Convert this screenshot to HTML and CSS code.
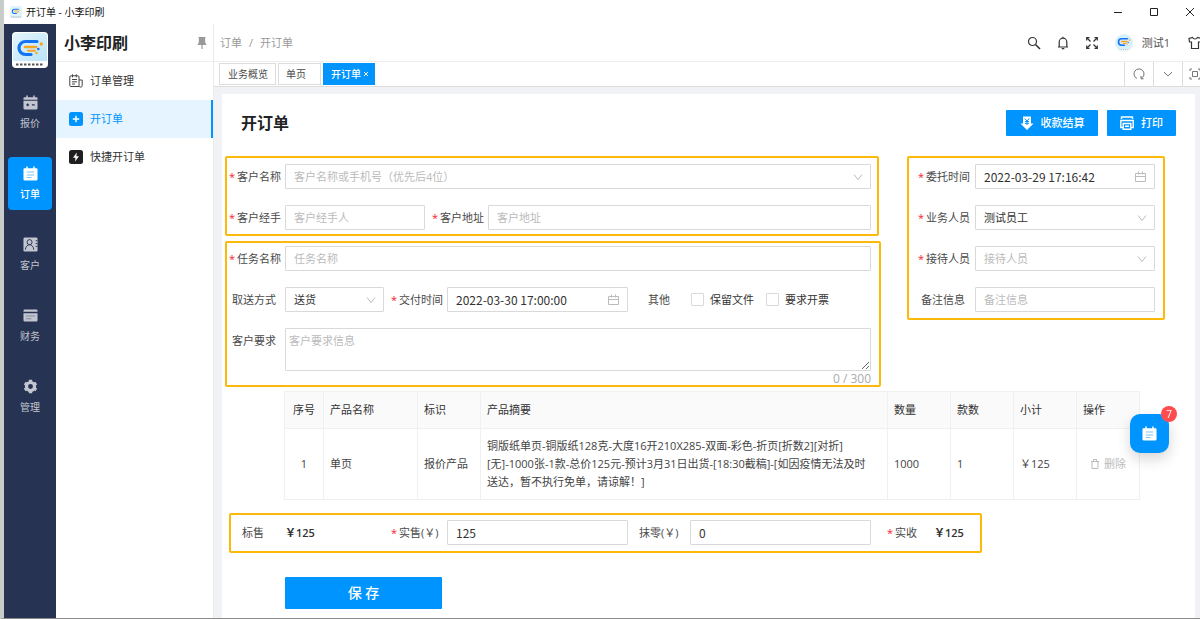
FILE: index.html
```html
<!DOCTYPE html>
<html lang="zh-CN">
<head>
<meta charset="utf-8">
<title>开订单 - 小李印刷</title>
<link rel="stylesheet" href="styles.css">
</head>
<body>
<svg class="defs" aria-hidden="true">
  <defs>
    <linearGradient id="sky" x1="0" y1="0" x2="1" y2="1"><stop offset="0" stop-color="#e4f5fd"/><stop offset="1" stop-color="#b9e3f8"/></linearGradient>
    <symbol id="mark" viewBox="0 0 36 36">
      <path d="M25 9.500H13.500a6.500 6.500 0 0 0 0 13H19" fill="none" stroke="#1473f3" stroke-width="3.200" stroke-linecap="round"/>
      <path d="M13 15h11" stroke="#f6a524" stroke-width="2.600" stroke-linecap="round"/>
      <path d="M16 18.800h7" stroke="#f6a524" stroke-width="2" stroke-linecap="round"/>
      <circle cx="29.300" cy="12" r="1.700" fill="#f6a524"/><circle cx="26.300" cy="17" r="1.300" fill="#1473f3"/><circle cx="24.500" cy="21" r="1.200" fill="#f6a524"/>
    </symbol>
    <symbol id="note" viewBox="0 0 16 16">
      <path fill="currentColor" d="M1.500 2.500h2V1a.8.8 0 0 1 1.600 0v1.500h5.800V1a.8.8 0 0 1 1.600 0v1.500h2a1 1 0 0 1 1 1V14a1.500 1.500 0 0 1-1.500 1.500H2A1.500 1.500 0 0 1 .5 14V3.500a1 1 0 0 1 1-1z"/>
      <path d="M4 6.500h8M4 9.500h8M4 12.300h5" stroke="#7cc4fb" stroke-width="1.100"/>
    </symbol>
    <symbol id="cal" viewBox="0 0 11 11"><path fill="none" stroke="currentColor" d="M.5 2.500h10v8H.5zM.5 5.500h10M3.500 0.500v3M7.500 0.500v3"/></symbol>
    <symbol id="down" viewBox="0 0 10 10"><path fill="none" stroke="currentColor" d="M1 2.500l4 5 4-5"/></symbol>
  </defs>
</svg>
<div class="window">
  <header class="titlebar">
    <svg class="titlebar-logo" viewBox="0 0 36 36"><rect width="36" height="36" rx="5" fill="#e1f4fd"/><use href="#mark"/><path d="M4 33h28" stroke="#888" stroke-width="2" stroke-dasharray="3 2"/></svg>
    <span class="titlebar-name">开订单 - 小李印刷</span>
    <div class="window-buttons">
      <button aria-label="最小化"><svg viewBox="0 0 10 10"><path d="M1 5.500h8"/></svg></button>
      <button aria-label="最大化"><svg viewBox="0 0 10 10"><path d="M1.500 1.500h7v7h-7z"/></svg></button>
      <button aria-label="关闭"><svg viewBox="0 0 10 10"><path d="M1 1l8 8M9 1L1 9"/></svg></button>
    </div>
  </header>
  <div class="app">
    <nav class="rail">
      <svg class="rail-logo" viewBox="0 0 36 36" role="img" aria-label="小李印刷"><rect width="36" height="36" rx="4" fill="#fff"/><path d="M1 5a4 4 0 0 1 4-4h26a4 4 0 0 1 4 4v24H1z" fill="url(#sky)"/><use href="#mark"/><path d="M4 32.500h28" stroke="#555" stroke-width="2" stroke-dasharray="2.500 1.500"/></svg>
      <a class="rail-item" href="#quote">
        <svg viewBox="0 0 16 16"><path fill="currentColor" d="M1.500 2.500h2V1a.8.8 0 0 1 1.600 0v1.500h5.800V1a.8.8 0 0 1 1.600 0v1.500h2a1 1 0 0 1 1 1V5H.5V3.500a1 1 0 0 1 1-1zM.5 6h15v8a1.500 1.500 0 0 1-1.500 1.500H2A1.500 1.500 0 0 1 .5 14z"/><path d="M3.500 10.500h3M5 9v3M9.500 10.500h3" stroke="#273352" stroke-width="1.200"/></svg>
        报价</a>
      <a class="rail-item active" href="#order"><svg><use href="#note"/></svg>订单</a>
      <a class="rail-item" href="#client">
        <svg viewBox="0 0 16 16"><rect x=".5" y=".5" width="15" height="15" rx="1.500" fill="currentColor"/><g fill="none" stroke="#273352" stroke-width="1"><circle cx="7" cy="5.500" r="2.700"/><path d="M2.500 13.500c.3-3 2-5.300 4.500-5.300s4.200 2.300 4.500 5.300M13.500 4h2M13.500 7h2M13.500 10h2"/></g></svg>
        客户</a>
      <a class="rail-item" href="#finance">
        <svg viewBox="0 0 16 16"><path fill="currentColor" d="M.5 3A1.500 1.500 0 0 1 2 1.500h12A1.500 1.500 0 0 1 15.500 3v1H.5zM.5 5.500h15V13a1.500 1.500 0 0 1-1.500 1.500H2A1.500 1.500 0 0 1 .5 13z"/><path d="M3 8.500h10M3 11.500h6" stroke="#7f879b" stroke-width="1"/></svg>
        财务</a>
      <a class="rail-item" href="#manage">
        <svg viewBox="0 0 16 16"><g fill="none" stroke="currentColor"><circle cx="8" cy="8" r="4.300" stroke-width="3.400"/><path d="M8 .8v2.500M8 12.700v2.500M1.800 4.400l2.100 1.300M12.100 10.300l2.100 1.300M1.800 11.600l2.100-1.300M12.100 5.700l2.100-1.300" stroke-width="3.600"/></g></svg>
        管理</a>
    </nav>
    <aside class="side">
      <div class="side-head"><h1>小李印刷</h1>
        <button class="plain" aria-label="固定菜单"><svg class="pin" viewBox="0 0 10 12"><path fill="#999" d="M1.500 0h7v1.200H8L8.300 6l1 1v1H5.600v4H4.400V8H.7V7l1-1L2 1.200h-.5z"/></svg></button></div>
      <a class="side-item" href="#list"><svg viewBox="0 0 14 14" fill="none" stroke="#444"><path d="M10 12.500H2a1.200 1.200 0 0 1-1.200-1.200V3A1.200 1.200 0 0 1 2 1.800h6.800A1.200 1.200 0 0 1 10 3v8.500a1.500 1.500 0 0 0 3.200 0V6H10M3.500.3v3M7.300.3v3M3 5.500h5M3 7.800h5M3 10h3"/></svg>订单管理</a>
      <a class="side-item active" href="#new"><svg viewBox="0 0 14 14"><rect width="14" height="14" rx="2.500" fill="#0094fe"/><path d="M7 3.800v6.400M3.800 7h6.400" stroke="#fff" stroke-width="1.400"/></svg>开订单</a>
      <a class="side-item" href="#quick"><svg viewBox="0 0 14 14"><rect width="14" height="14" rx="2.500" fill="#1f1f1f"/><path d="M7.800 2.500L4 7.700h2.500L6 11.500l4-5.300H7.400z" fill="#fff"/></svg>快捷开订单</a>
    </aside>
    <div class="main">
      <div class="topbar">
        <nav class="crumbs"><a href="#order">订单</a><span>/</span><span>开订单</span></nav>
        <div class="tools">
          <button class="plain" aria-label="搜索"><svg viewBox="0 0 14 14"><circle cx="5.500" cy="5.500" r="4"/><path d="M8.500 8.500l4.500 4.500" stroke-width="1.600"/></svg></button>
          <button class="plain" aria-label="通知"><svg viewBox="0 0 14 14"><path d="M3.200 10.500V6a3.800 3.800 0 0 1 7.600 0v4.500M2 11h10M7 .8v1.500M5.700 12.700h2.600"/></svg></button>
          <button class="plain" aria-label="全屏"><svg viewBox="0 0 14 14"><path stroke-width="1.300" d="M2 2l3.500 3.500M12 2L8.500 5.500M2 12l3.500-3.500M12 12L8.500 8.500"/><path d="M1.700 4.500V1.700h2.800M9.500 1.700h2.800v2.800M1.700 9.500v2.800h2.800M9.500 12.300h2.800V9.500"/></svg></button>
          <a class="user" href="#me"><svg viewBox="0 0 36 36"><circle cx="18" cy="18" r="18" fill="#d8f0fc"/><path d="M5 30h26a18 18 0 0 1-26 0z" fill="#fff"/><use href="#mark"/><path d="M9 31.500h18" stroke="#888" stroke-width="1.500" stroke-dasharray="2 1.500"/></svg>测试1</a>
          <button class="plain" aria-label="主题"><svg viewBox="0 0 14 14"><path d="M4.500 1.500c1 2 4 2 5 0l3.500 1-.5 3.500h-2v6.500h-7V6h-2L1 2.500z"/></svg></button>
        </div>
      </div>
      <div class="tabs">
        <div class="tab-list">
          <a class="tab" href="#overview">业务概览</a>
          <a class="tab wide" href="#single">单页</a>
          <a class="tab active" href="#new">开订单<button class="tab-close" aria-label="关闭标签"><svg viewBox="0 0 6 6"><path d="M1 1l4 4M5 1L1 5" stroke="#fff"/></svg></button></a>
        </div>
        <div class="tab-tools">
          <button aria-label="刷新"><svg viewBox="0 0 12 12"><path d="M4 10.500A5 5 0 1 1 8 10.500M8 8v2.800h2.600"/></svg></button>
          <button aria-label="更多"><svg viewBox="0 0 12 12"><path d="M2 4l4 4 4-4"/></svg></button>
          <button aria-label="最大化内容"><svg viewBox="0 0 12 12"><path d="M3.500 3.500h5v5h-5zM1 3V1h2M9 1h2v2M1 9v2h2M9 11h2V9"/></svg></button>
        </div>
      </div>
      <main class="stage">
        <form class="panel">
          <div class="panel-head">
            <h2>开订单</h2>
            <button type="button" class="primary settle"><svg viewBox="0 0 14 14"><path fill="#fff" d="M3 .5h8v7h2.500L7 14 .5 7.500H3z"/><path d="M4.800 2.500L7 5l2.200-2.500M7 5v4M5 5.500h4M5 7.300h4" fill="none" stroke="#0094fe"/></svg>收款结算</button>
            <button type="button" class="primary print"><svg viewBox="0 0 14 14" fill="none" stroke="#fff" stroke-width="1.400"><path d="M1.500 3V1h11v2M2.500 11.500H.8v-7h12.400v7h-1.700M3.200 7.500h7.600v5.700H3.200zM5 10.300h4"/></svg>打印</button>
          </div>
          <div class="columns">
            <div class="left">
              <section class="frame client">
                <div class="row">
                  <label class="req" for="name">客户名称</label>
                  <span class="pick grow"><select id="name" class="hint"><option>客户名称或手机号（优先后4位）</option></select><svg><use href="#down"/></svg></span>
                </div>
                <div class="row">
                  <label class="req" for="agent">客户经手</label>
                  <input id="agent" class="agent" placeholder="客户经手人">
                  <label class="req mid" for="addr">客户地址</label>
                  <input id="addr" class="grow" placeholder="客户地址">
                </div>
              </section>
              <section class="frame task">
                <div class="row">
                  <label class="req" for="task">任务名称</label>
                  <input id="task" class="grow" placeholder="任务名称">
                </div>
                <div class="row">
                  <label for="delivery">取送方式</label>
                  <span class="pick delivery"><select id="delivery"><option>送货</option></select><svg><use href="#down"/></svg></span>
                  <label class="req mid" for="due">交付时间</label>
                  <span class="pick medium"><input id="due" class="date" value="2022-03-30 17:00:00"><svg class="cal"><use href="#cal"/></svg></span>
                  <span class="other">其他</span>
                  <label class="check"><input type="checkbox">保留文件</label>
                  <label class="check"><input type="checkbox">要求开票</label>
                </div>
                <div class="row top">
                  <label for="wish">客户要求</label>
                  <div class="grow area"><textarea id="wish" placeholder="客户要求信息"></textarea><span class="count">0 / 300</span></div>
                </div>
              </section>
            </div>
            <section class="frame staff">
              <div class="row"><label class="req" for="time">委托时间</label><span class="pick grow"><input id="time" class="date" value="2022-03-29 17:16:42"><svg class="cal"><use href="#cal"/></svg></span></div>
              <div class="row"><label class="req" for="sales">业务人员</label><span class="pick grow"><select id="sales"><option>测试员工</option></select><svg><use href="#down"/></svg></span></div>
              <div class="row"><label class="req" for="host">接待人员</label><span class="pick grow"><select id="host" class="hint"><option>接待人员</option></select><svg><use href="#down"/></svg></span></div>
              <div class="row"><label for="memo">备注信息</label><input id="memo" class="grow" placeholder="备注信息"></div>
            </section>
          </div>
          <table class="goods">
            <colgroup><col class="c-no"><col class="c-name"><col class="c-tag"><col><col class="c-num"><col class="c-num"><col class="c-num"><col class="c-num"></colgroup>
            <thead><tr><th class="center">序号</th><th>产品名称</th><th>标识</th><th>产品摘要</th><th>数量</th><th>款数</th><th>小计</th><th>操作</th></tr></thead>
            <tbody><tr><td class="center">1</td><td>单页</td><td>报价产品</td>
              <td>铜版纸单页-铜版纸128克-大度16开210X285-双面-彩色-折页[折数2][对折]<br>[无]-1000张-1款-总价125元-预计3月31日出货-[18:30截稿]-[如因疫情无法及时<br>送达，暂不执行免单，请谅解！]</td>
              <td>1000</td><td>1</td><td>￥125</td>
              <td class="center"><button type="button" class="remove" disabled><svg viewBox="0 0 10 10"><path d="M1 2.500h8M3.500 2.500v-2h3v2M2 2.500v7h6v-7" fill="none" stroke="currentColor"/></svg>删除</button></td></tr></tbody>
          </table>
          <section class="frame total">
            <span class="sum-label">标售</span><strong class="sum">￥125</strong>
            <label class="req" for="price">实售(￥)</label><input id="price" class="medium date" value="125">
            <label for="round">抹零(￥)</label><input id="round" class="medium date" value="0">
            <span class="req paid">实收</span><strong>￥125</strong>
          </section>
          <button type="submit" class="primary save">保 存</button>
        </form>
      </main>
    </div>
  </div>
  <button class="float" aria-label="待办"><svg><use href="#note"/></svg><span class="badge">7</span></button>
</div>
</body>
</html>
```
FILE: styles.css
```css
* { box-sizing: border-box; }
body {
  margin: 0;
  font: 11px/18px "Open Sans", "Noto Sans CJK SC", sans-serif;
  color: #4a4a4a;
  background: #fff;
}
button, input, select, textarea { font: inherit; color: inherit; margin: 0; }
button { cursor: pointer; border: 0; padding: 0; background: none; }
a { color: inherit; text-decoration: none; }
h1, h2 { margin: 0; font-size: 16px; line-height: 24px; font-weight: 700; color: #222; }
svg { flex: none; }
.defs { position: absolute; width: 0; height: 0; }
.window {
  display: flex;
  flex-direction: column;
  min-height: 100vh;
  border-left: 4px solid #c8cdcc;
  border-bottom: 1px solid #8c8c8c;
  overflow: hidden;
}
.titlebar { display: flex; align-items: center; height: 24px; padding-left: 6px; font-size: 10px; color: #111; }
.titlebar-logo { width: 12px; height: 12px; margin-right: 4px; }
.window-buttons { display: flex; margin: 0 -8px 0 auto; }
.window-buttons button { width: 36px; height: 22px; display: grid; place-items: center; }
.window-buttons svg { width: 10px; height: 10px; fill: none; stroke: #222; }
.app { flex: 1; display: flex; }

.rail { width: 52px; background: #273352; color: #c2c6d0; display: flex; flex-direction: column; align-items: center; }
.rail-logo { width: 36px; height: 36px; margin: 8px 0 18px; }
.rail-item {
  width: 44px; height: 53px; margin-bottom: 18px; padding-top: 2px; border-radius: 4px;
  display: flex; flex-direction: column; align-items: center; justify-content: center; gap: 4px;
  font-size: 10px;
}
.rail-item svg { width: 15px; height: 15px; }
.rail-item.active { background: #0094fe; color: #fff; font-weight: 500; }

.side { width: 158px; border-right: 1px solid #ebebeb; }
.side-head { display: flex; align-items: center; justify-content: space-between; height: 38px; padding: 0 6px 0 8px; border-bottom: 1px solid #eee; }
.pin { width: 10px; height: 12px; display: block; }
.side-item { display: flex; align-items: center; gap: 7px; height: 38px; padding-left: 13px; color: #333; }
.side-item svg { width: 14px; height: 14px; }
.side-item.active { background: #e6f4ff; color: #0094fe; border-right: 2px solid #0094fe; }

.main { flex: 1; min-width: 0; display: flex; flex-direction: column; }
.topbar { display: flex; align-items: center; justify-content: space-between; height: 38px; padding-left: 6px; border-bottom: 1px solid #eee; }
.crumbs { display: flex; gap: 7px; color: #999; }
.tools { display: flex; align-items: center; gap: 15px; margin-right: -2px; color: #555; }
.plain { display: block; }
.tools .plain svg { width: 14px; height: 14px; display: block; fill: none; stroke: #333; stroke-width: 1.2; }
.tools .user { display: flex; align-items: center; gap: 9px; margin: 0 3px 0 1px; }
.tools .user svg { width: 18px; height: 18px; }
.tabs { display: flex; justify-content: space-between; height: 25px; border-bottom: 1px solid #ddd; }
.tab-list { display: flex; gap: 2px; padding: 1px 0 1px 5px; }
.tab { display: flex; align-items: center; padding: 0 8px; border: 1px solid #ddd; font-size: 10px; }
.tab:first-child { padding: 0 7px 0 8px; }
.tab.wide { padding: 0 14px 0 7px; }
.tab.active { background: #0094fe; border-color: #0094fe; color: #fff; font-weight: 500; padding: 0 5px 0 7px; }
.tab-close { margin-left: 2px; }
.tab-close svg { display: block; width: 6px; height: 6px; }
.tab-tools { display: flex; margin-right: -3px; }
.tab-tools button { width: 29px; border-left: 1px solid #ddd; display: grid; place-items: center; }
.tab-tools button:last-child { width: 21px; padding-left: 4px; }
.tab-tools svg { width: 12px; height: 12px; fill: none; stroke: #777; }

.stage { flex: 1; background: #f0f2f5; padding: 7px 5px 0 8px; }
.panel { background: #fff; min-height: 100%; padding: 0 30px 8px 3px; display: flow-root; }
.panel-head { display: flex; align-items: center; gap: 9px; margin: 16px -11px 20px 16px; }
.panel-head h2 { margin-right: auto; }
.primary { background: #0094fe; color: #fff; border-radius: 1px; font-weight: 500; display: flex; align-items: center; justify-content: center; }
.panel-head .primary { height: 26px; gap: 7px; }
.primary svg { width: 14px; height: 14px; }
.settle { width: 92px; }
.print { width: 69px; }

.columns { display: flex; align-items: flex-start; gap: 26px; }
.left { flex: 1; min-width: 0; display: flex; flex-direction: column; gap: 5px; }
.frame { border: 2px solid #fdb90a; border-radius: 2px; }
.client { margin-right: 2px; padding: 6px 6px 4px 0; }
.task { padding: 3px 8px 0 0; }
.staff { width: 258px; padding: 6px 8px 6px 7px; }
.client, .task, .staff { display: flex; flex-direction: column; gap: 16px; }
.row { display: flex; align-items: center; }
.row.top { align-items: flex-start; }
.row > label { width: 58px; padding-left: 5px; flex: none; }
.row > .req { padding-left: 2px; }
.req::before { content: "*"; display: inline-block; width: 8px; color: #f5222d; }
.staff .row > label { width: 59px; }
.row > .mid { width: 63px; padding-left: 7px; }
.row.top > label { padding-top: 4px; }
.grow { flex: 1; min-width: 0; }
input:not([type]), select, textarea {
  height: 25px; border: 1px solid #d9d9d9; border-radius: 1px; background: #fff;
  padding: 0 8px; outline: 0; appearance: none; color: #333;
}
::placeholder { color: #bbb; opacity: 1; }
select.hint { color: #bbb; }
.pick { display: grid; align-items: center; }
.pick > * { grid-area: 1 / 1; width: 100%; min-width: 0; }
.pick > svg { width: 10px; height: 10px; justify-self: end; margin-right: 8px; color: #bbb; pointer-events: none; }
.pick > .cal { width: 11px; height: 11px; margin-right: 9px; }
input.date { font-family: "Noto Sans CJK SC", sans-serif; font-size: 12px; }
.agent { width: 140px; }
.delivery { width: 99px; }
.medium { width: 181px; }
.other { margin: 0 21px 0 20px; }
.row > .check { width: auto; padding: 0; margin-right: 12px; display: flex; align-items: center; gap: 6px; color: #333; }
.check input { appearance: none; width: 13px; height: 13px; border: 1px solid #d9d9d9; border-radius: 1px; }
.area { display: flex; flex-direction: column; }
.area textarea { height: 43px; padding: 3px; resize: vertical; }
.count { font-size: 12px; line-height: 14px; text-align: right; color: #aaa; padding-top: 1px; margin-bottom: -1px; }

.goods { width: calc(100% - 84px); margin: 4px 0 0 59px; border-collapse: collapse; table-layout: fixed; color: #444; }
.goods th, .goods td { border: 1px solid #f0f0f0; padding: 0 6px; text-align: left; font-weight: 400; white-space: nowrap; }
.goods th { height: 37px; background: #fafafa; color: #333; }
.goods td { height: 71px; }
.goods .center { text-align: center; }
.c-no { width: 39px; }
.c-name { width: 94px; }
.c-tag, .c-num { width: 63px; }
.remove { color: #bbb; display: inline-flex; align-items: center; gap: 4px; }
.remove svg { width: 10px; height: 10px; }

.total { display: flex; align-items: center; width: 753px; max-width: 100%; margin: 13px 0 0 4px; padding: 5px 0 6px 11px; }
.total > label, .total > span, .total > strong { flex: none; }
.total strong { color: #333; font-weight: 600; }
.sum-label { width: 43px; }
.sum { width: 106px; }
.total > label { width: 56px; }
.total .medium { flex: none; }
.total > label:not(.req) { width: 62px; padding-left: 11px; }
.paid { padding-left: 16px; width: 63px; }
.save { width: 157px; height: 32px; margin: 24px 0 0 60px; font-size: 14px; }

.float {
  position: fixed; right: 31px; top: 414px; width: 39px; height: 39px; border-radius: 10px;
  background: #0094fe; color: #fff; display: grid; place-items: center; box-shadow: 0 6px 14px rgba(0, 0, 0, .16);
}
.float svg { width: 15px; height: 15px; }
.badge { position: absolute; top: -8px; right: -8px; width: 16px; height: 16px; border-radius: 8px; background: #ff4d4f; font-size: 10px; line-height: 16px; }
```
